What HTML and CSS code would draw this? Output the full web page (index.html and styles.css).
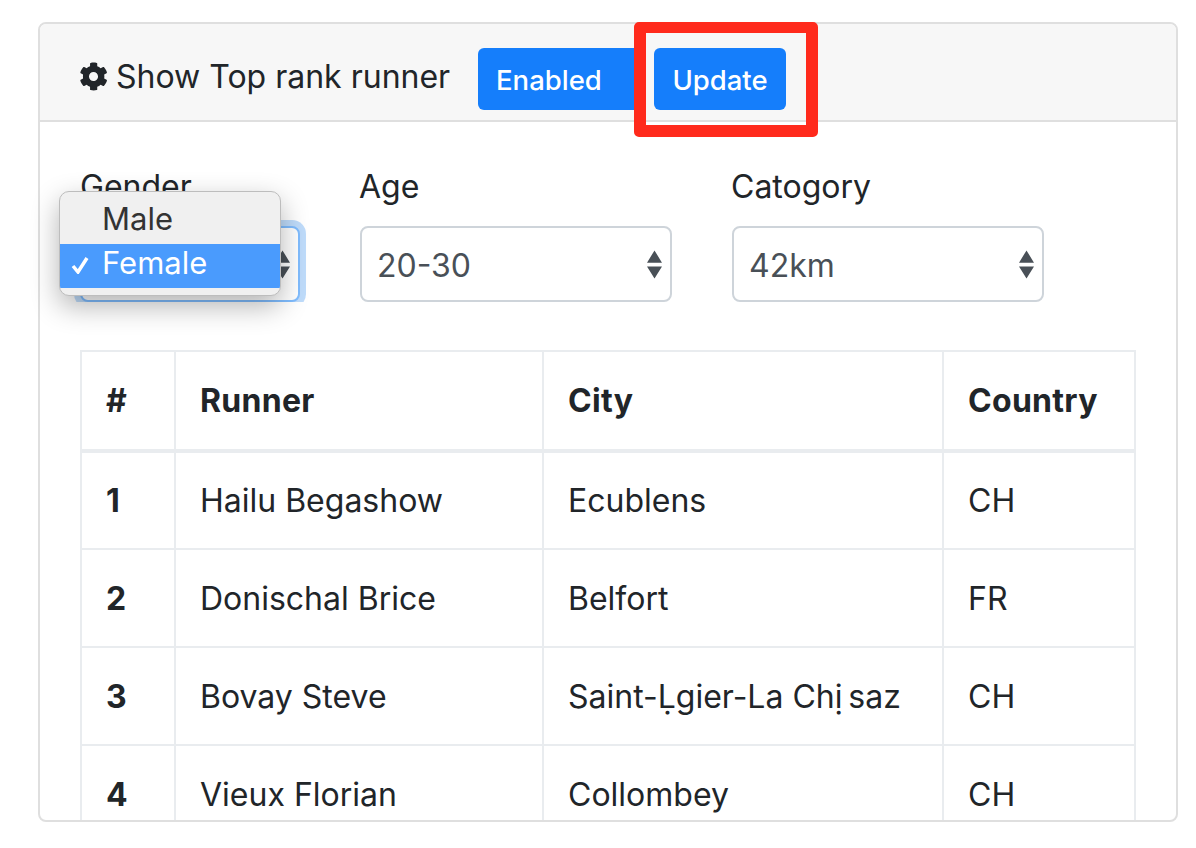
FILE: index.html
```html
<!DOCTYPE html>
<html>
<head>
<meta charset="utf-8">
<title>Top rank runner</title>
<link rel="stylesheet" href="styles.css">
</head>
<body>
<div class="card">
	<div class="card-header">
		<svg class="gear" viewBox="0 0 512 512"><path d="M487 315l-42-24c4-23 4-47 0-70l42-24c5-3 7-9 6-14-11-35-30-67-54-93-4-4-10-5-15-2l-42 24c-18-15-38-27-60-35V28c0-6-4-11-9-12-37-8-74-8-109 0-5 1-9 6-9 12v49c-22 8-42 20-60 35L93 88c-5-3-11-2-15 2-24 26-43 58-54 93-2 5 1 11 6 14l42 24c-4 23-4 47 0 70l-42 24c-5 3-7 9-6 14 11 35 30 67 54 93 4 4 10 5 15 2l42-24c18 15 38 27 60 35v49c0 6 4 11 9 12 37 8 74 8 109 0 5-1 9-6 9-12v-49c22-8 42-20 60-35l42 24c5 3 11 2 15-2 24-26 43-58 54-93 1-5-1-11-6-14zM256 336c-44 0-80-36-80-80s36-80 80-80 80 36 80 80-36 80-80 80z"/></svg>
		<span class="title">Show Top rank runner</span>
		<button class="btn btn-enabled">Enabled</button>
		<button class="btn btn-update">Update</button>
	</div>
	<div class="card-body">
		<div class="filters">
			<div class="field field-gender">
				<label>Gender</label>
				<div class="select focused">
					<span>Female</span>
					<svg class="arrows" viewBox="0 0 16 30"><path d="M8 0l8 13H0zM8 30L0 17h16z"/></svg>
				</div>
			</div>
			<div class="field field-age">
				<label>Age</label>
				<div class="select">
					<span>20-30</span>
					<svg class="arrows" viewBox="0 0 16 30"><path d="M8 0l8 13H0zM8 30L0 17h16z"/></svg>
				</div>
			</div>
			<div class="field field-cat">
				<label>Catogory</label>
				<div class="select">
					<span>42km</span>
					<svg class="arrows" viewBox="0 0 16 30"><path d="M8 0l8 13H0zM8 30L0 17h16z"/></svg>
				</div>
			</div>
		</div>
		<table class="runners">
			<thead>
				<tr><th class="c1">#</th><th class="c2">Runner</th><th class="c3">City</th><th class="c4">Country</th></tr>
			</thead>
			<tbody>
				<tr><th>1</th><td>Hailu Begashow</td><td>Ecublens</td><td>CH</td></tr>
				<tr><th>2</th><td>Donischal Brice</td><td>Belfort</td><td>FR</td></tr>
				<tr><th>3</th><td>Bovay Steve</td><td>Saint-Ḷgier-La Chị&thinsp;saz</td><td>CH</td></tr>
				<tr><th>4</th><td>Vieux Florian</td><td>Collombey</td><td>CH</td></tr>
			</tbody>
		</table>
	</div>
</div>

<!-- open dropdown of the gender select -->
<ul class="popup">
	<li>Male</li>
	<li class="on"><svg class="tick" viewBox="0 0 18 18"><path d="M2 10l5 6L16 2"/></svg>Female</li>
</ul>
<!-- red box drawn on the screenshot -->
<div class="mark"></div>
</body>
</html>
```

FILE: styles.css
```css
*{margin:0;padding:0;box-sizing:border-box;}
html,body{height:848px;overflow:hidden;}
body{background:#fff;font-family:Inter,"Liberation Sans",sans-serif;color:#212529;padding:22px 18px 26px 38px;position:relative;}

.card{height:800px;border:2px solid #dfdfdf;border-radius:8px;overflow:hidden;background:#fff;}
.card-header{height:98px;background:#f7f7f7;border-bottom:2px solid #dfdfdf;padding:24px 0 0 39px;display:flex;align-items:flex-start;}
.gear{width:29px;height:29px;margin-top:14px;fill:#212529;flex:none;}
.title{font-size:32px;line-height:58px;margin-left:8px;width:362px;white-space:nowrap;}
.btn{height:62px;border:0;background:#157efb;color:#fff;font:500 27.5px Inter,"Liberation Sans",sans-serif;border-radius:6px;padding-top:2px;}
.btn-enabled{width:162px;border-radius:6px 0 0 6px;text-align:left;padding-left:18px;}
.btn-update{width:132px;margin-left:14px;}

.card-body{padding:43px 40px 0 40px;}
.filters{display:flex;height:185px;}
.field label{display:block;font-size:32px;line-height:44px;}
.field .select{margin-top:17px;}
.field-gender{width:280px;}
.field-age{width:372px;}
.field-cat{width:312px;}
.field-age label,.field-cat label{text-indent:-1px;}
.select{height:76px;border:2px solid #ced4da;border-radius:8px;display:flex;align-items:center;justify-content:space-between;padding:2px 8px 0 15px;font-size:32px;color:#495057;background:#fff;}
.field-gender .select{width:220px;}
.field-age .select,.field-cat .select{width:312px;}
.select.focused{border-color:#80bdff;box-shadow:0 0 0 6px #bfdcfb;clip-path:inset(-6px -6px 0 -6px);}
.arrows{width:15px;height:29px;margin-top:-2px;fill:#495057;flex:none;}

.runners{border-collapse:collapse;table-layout:fixed;width:1054px;font-size:32px;}
.runners th,.runners td{border:2px solid #e9ecef;padding:0 24px;text-align:left;height:98px;white-space:nowrap;}
.runners th{letter-spacing:.3px;}
.runners thead th{font-weight:700;height:100px;border-bottom:4px solid #e9ecef;}
.c1{width:94px;}
.c2{width:368px;}
.c3{width:400px;}
.c4{width:192px;}

.popup{position:absolute;left:59px;top:191px;width:222px;height:105px;list-style:none;background:#f0f0f0;border:1px solid #bdbdbd;border-radius:10px;padding-top:8px;font-size:31px;color:#333;box-shadow:0 10px 28px rgba(0,0,0,.3);overflow:hidden;}
.popup li{height:44px;line-height:38px;padding-left:42px;position:relative;}
.popup li.on{background:#4a9bfd;color:#fff;}
.tick{position:absolute;left:11px;top:12px;width:18px;height:18px;fill:none;stroke:#fff;stroke-width:3.5;}

.mark{position:absolute;left:634px;top:22px;width:184px;height:115px;border:solid #ff2a1c;border-width:11px 12px 12px;border-radius:5px;}
```
